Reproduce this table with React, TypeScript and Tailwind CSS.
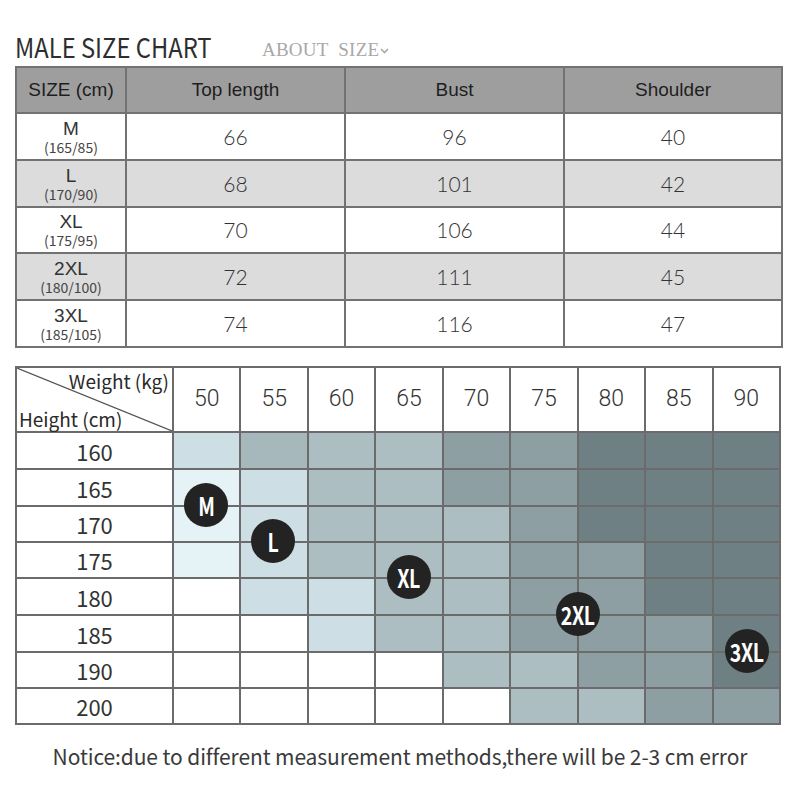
const sans = "font-['Liberation_Sans',Arial,sans-serif]";
const myriad = "font-['Noto_Sans_CJK_SC','Noto_Sans',sans-serif]";

const W = "bg-white";
const A = "bg-[#e6f3f6]";
const B = "bg-[#cddfe4]";
const C = "bg-[#adbec3]";
const C2 = "bg-[#a7b8bd]";
const D = "bg-[#8e9fa3]";
const E = "bg-[#6f8084]";

const sizeRows = [
  { size: "M", sub: "(165/85)", top: 66, bust: 96, shoulder: 40, bg: "bg-white", h: "h-[47px]" },
  { size: "L", sub: "(170/90)", top: 68, bust: 101, shoulder: 42, bg: "bg-[#dcdcdc]", h: "h-[47px]" },
  { size: "XL", sub: "(175/95)", top: 70, bust: 106, shoulder: 44, bg: "bg-white", h: "h-[46px]" },
  { size: "2XL", sub: "(180/100)", top: 72, bust: 111, shoulder: 45, bg: "bg-[#dcdcdc]", h: "h-[47px]" },
  { size: "3XL", sub: "(185/105)", top: 74, bust: 116, shoulder: 47, bg: "bg-white", h: "h-[47px]" },
];

const weights = [50, 55, 60, 65, 70, 75, 80, 85, 90];

const heightRows = [
  { label: 160, h: "h-[37px]", cells: [B, C2, C, C, D, D, E, E, E] },
  { label: 165, h: "h-[37px]", cells: [A, B, C, C, D, D, E, E, E] },
  { label: 170, h: "h-[36px]", cells: [A, B, C, C, C, D, E, E, E] },
  { label: 175, h: "h-[36px]", cells: [A, B, C, C, C, D, D, E, E] },
  { label: 180, h: "h-[37px]", cells: [W, B, B, C, C, D, D, E, E] },
  { label: 185, h: "h-[37px]", cells: [W, W, B, C, C, D, D, D, E] },
  { label: 190, h: "h-[36px]", cells: [W, W, W, W, C, C, D, D, E] },
  { label: 200, h: "h-[36px]", cells: [W, W, W, W, W, C, C, D, D] },
];

// badges sit over the grid, centred on row / column lines
const badges = [
  { text: "M", pos: "left-[169px] top-[117px]" },
  { text: "L", pos: "left-[236px] top-[153px]" },
  { text: "XL", pos: "left-[372px] top-[189px]" },
  { text: "2XL", pos: "left-[541px] top-[226px]" },
  { text: "3XL", pos: "left-[710px] top-[263px]" },
];

const Badge = ({ text, pos }: { text: string; pos: string }) => (
  <div
    className={`absolute ${pos} w-[44px] h-[44px] rounded-full bg-[#232323] flex items-center justify-center`}
  >
    <span className={`${myriad} text-white font-bold text-[25px] leading-none scale-x-[0.78] tracking-[-0.5px]`}>
      {text}
    </span>
  </div>
);

export default function App() {
  return (
    <div className="w-[800px] h-[800px] bg-white text-[#333] px-[15px] pt-[20px]">
      {/* Title */}
      <div className="flex items-end h-[40px]">
        <div className="w-[247px] shrink-0">
          <h1 className={`${myriad} text-[27px] leading-none text-[#2e2e2e] scale-x-[0.88] origin-left whitespace-nowrap`}>
            MALE SIZE CHART
          </h1>
        </div>
        <div className="flex items-center font-['Liberation_Serif',serif] text-[19px] leading-none text-[#a8a8a8] pb-[1px]">
          <span className="tracking-[0.2px]">ABOUT&nbsp; SIZE</span>
          <svg width="9" height="6" viewBox="0 0 9 6" className="ml-[1px] mt-[3px]">
            <path d="M1 1 L4.5 4.5 L8 1" stroke="#a8a8a8" strokeWidth="1.6" fill="none" />
          </svg>
        </div>
      </div>

      {/* Size table */}
      <table className="mt-[6px] w-[766px] table-fixed border-collapse border-2 border-[#727272]">
        <colgroup>
          <col className="w-[110px]" />
          <col className="w-[219px]" />
          <col className="w-[219px]" />
          <col className="w-[218px]" />
        </colgroup>
        <thead>
          <tr className={`h-[46px] bg-[#9e9e9e] ${sans} text-[19px] text-[#1e1e1e]`}>
            <th className="border-2 border-[#727272] font-normal">SIZE (cm)</th>
            <th className="border-2 border-[#727272] font-normal">Top length</th>
            <th className="border-2 border-[#727272] font-normal">Bust</th>
            <th className="border-2 border-[#727272] font-normal">Shoulder</th>
          </tr>
        </thead>
        <tbody>
          {sizeRows.map((r) => (
            <tr key={r.size} className={`${r.h} ${r.bg}`}>
              <td className="border-2 border-[#727272] text-center p-0">
                <div className={`${sans} text-[19px] leading-[21px] text-[#333]`}>{r.size}</div>
                <div className={`${myriad} text-[14px] leading-[17px] text-[#444]`}>{r.sub}</div>
              </td>
              <td className="border-2 border-[#727272] text-center font-['Lato',sans-serif] font-light text-[21px] text-[#333]">{r.top}</td>
              <td className="border-2 border-[#727272] text-center font-['Lato',sans-serif] font-light text-[21px] text-[#333]">{r.bust}</td>
              <td className="border-2 border-[#727272] text-center font-['Lato',sans-serif] font-light text-[21px] text-[#333]">{r.shoulder}</td>
            </tr>
          ))}
        </tbody>
      </table>

      {/* Height / weight chart */}
      <div className="relative mt-[18px] w-[766px]">
        <table className="w-[766px] table-fixed border-collapse border-2 border-[#6b6b6b]">
          <colgroup>
            <col className="w-[157px]" />
            {weights.map((w) => (
              <col key={w} />
            ))}
          </colgroup>
          <thead>
            <tr className="h-[65px]">
              <th className="relative border-2 border-[#6b6b6b] p-0 font-normal">
                <svg className="absolute inset-0 w-full h-full" viewBox="0 0 157 65" preserveAspectRatio="none">
                  <line x1="0" y1="0" x2="157" y2="65" stroke="#555" strokeWidth="1.2" />
                </svg>
                <div className={`relative h-[63px] flex flex-col justify-between ${myriad} text-[19px] leading-none text-[#2a2a2a]`}>
                  <span className="self-end pr-[3px] pt-[3px]">Weight (kg)</span>
                  <span className="self-start pl-[2px] pb-[3px]">Height (cm)</span>
                </div>
              </th>
              {weights.map((w) => (
                <th key={w} className="border-2 border-[#6b6b6b] font-['Roboto',sans-serif] font-light text-[23px] text-[#333]">
                  {w}
                </th>
              ))}
            </tr>
          </thead>
          <tbody>
            {heightRows.map((r) => (
              <tr key={r.label} className={r.h}>
                <td className={`border-2 border-[#6b6b6b] text-center ${myriad} text-[22px] leading-none text-[#333]`}>
                  {r.label}
                </td>
                {r.cells.map((c, i) => (
                  <td key={i} className={`border-2 border-[#6b6b6b] ${c}`} />
                ))}
              </tr>
            ))}
          </tbody>
        </table>
        {badges.map((b) => (
          <Badge key={b.text} text={b.text} pos={b.pos} />
        ))}
      </div>

      {/* Notice */}
      <p className={`mt-[21px] text-center ${myriad} text-[21px] leading-none text-[#3a3a3a] tracking-[-0.1px]`}>
        Notice:due to different measurement methods,there will be 2-3 cm error
      </p>
    </div>
  );
}
